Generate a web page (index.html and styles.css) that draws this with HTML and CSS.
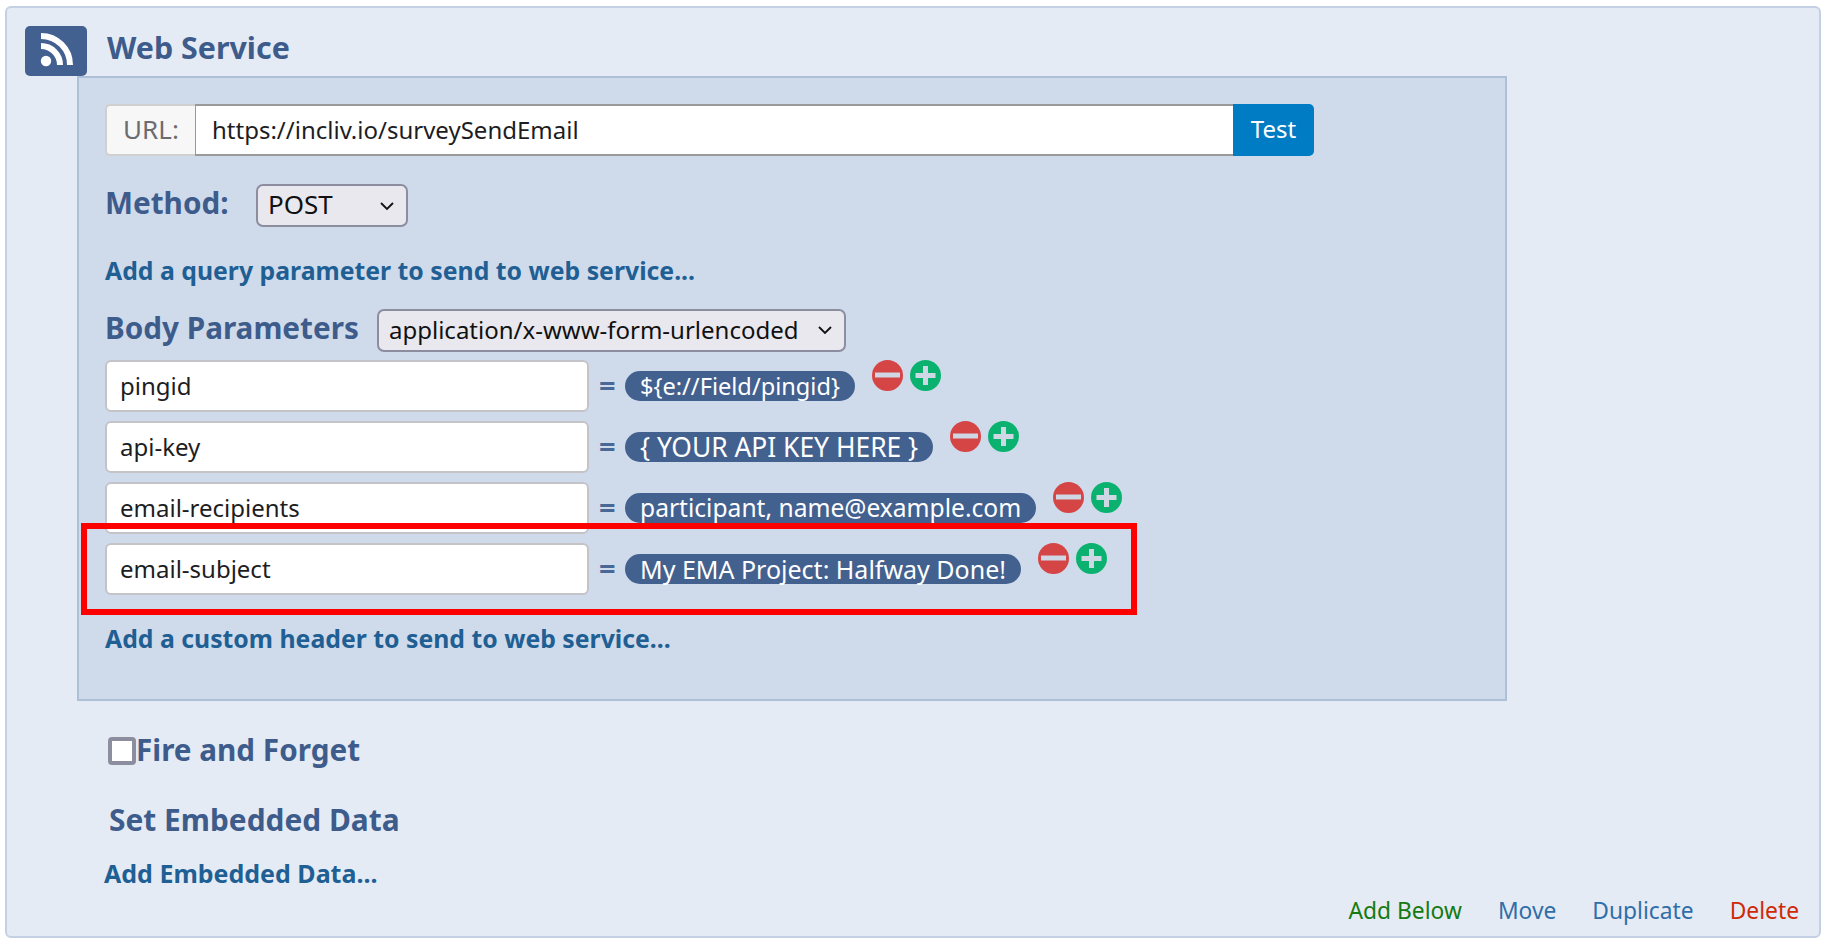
FILE: index.html
```html
<!DOCTYPE html>
<html lang="en">
<head>
<meta charset="utf-8">
<title>Web Service</title>
<link rel="stylesheet" href="styles.css">
</head>
<body>
<main class="card">
  <header class="card-head">
    <span class="type-icon">
      <svg width="62" height="50" viewBox="0 0 62 50"><circle cx="21" cy="35" r="5.2" fill="#fff"/><path d="M16 20a19 19 0 0 1 19 19M16 10a29 29 0 0 1 29 29" fill="none" stroke="#fff" stroke-width="6"/></svg>
    </span>
    <h1 class="title">Web Service</h1>
  </header>
  <section class="panel">
    <div class="url-row">
      <span class="url-label">URL:</span>
      <input class="url-input" value="https://incliv.io/surveySendEmail">
      <button class="test-btn">Test</button>
    </div>
    <div class="method-row">
      <span class="heading method-label">Method:</span>
      <span class="select select-method"><span class="select-text post">POST</span><svg class="chev" width="16" height="10" viewBox="0 0 16 10"><path d="M2 2l6 6 6-6" fill="none" stroke="#111" stroke-width="1.800"/></svg></span>
    </div>
    <a class="link query-link">Add a query parameter to send to web service...</a>
    <div class="body-row">
      <span class="heading body-label">Body Parameters</span>
      <span class="select select-body"><span class="select-text">application/x-www-form-urlencoded</span><svg class="chev" width="16" height="10" viewBox="0 0 16 10"><path d="M2 2l6 6 6-6" fill="none" stroke="#111" stroke-width="1.800"/></svg></span>
    </div>
    <div class="params">
      <div class="param">
        <input class="param-key" value="pingid"><span class="eq">=</span><span class="pill pill-field">${e://Field/pingid}</span>
        <span class="round minus"><svg width="31" height="31" viewBox="0 0 31 31"><path d="M3 15h25" stroke="#cfd7e4" stroke-width="5"/></svg></span>
        <span class="round plus"><svg width="31" height="31" viewBox="0 0 31 31"><path d="M5.500 15.500h20M15.500 6v19" stroke="#cfd7e4" stroke-width="5"/></svg></span>
      </div>
      <div class="param">
        <input class="param-key" value="api-key"><span class="eq">=</span><span class="pill pill-caps">{ YOUR API KEY HERE }</span>
        <span class="round minus"><svg width="31" height="31" viewBox="0 0 31 31"><path d="M3 15h25" stroke="#cfd7e4" stroke-width="5"/></svg></span>
        <span class="round plus"><svg width="31" height="31" viewBox="0 0 31 31"><path d="M5.500 15.500h20M15.500 6v19" stroke="#cfd7e4" stroke-width="5"/></svg></span>
      </div>
      <div class="param">
        <input class="param-key" value="email-recipients"><span class="eq">=</span><span class="pill pill-mail">participant, name@example.com</span>
        <span class="round minus"><svg width="31" height="31" viewBox="0 0 31 31"><path d="M3 15h25" stroke="#cfd7e4" stroke-width="5"/></svg></span>
        <span class="round plus"><svg width="31" height="31" viewBox="0 0 31 31"><path d="M5.500 15.500h20M15.500 6v19" stroke="#cfd7e4" stroke-width="5"/></svg></span>
      </div>
      <div class="param">
        <input class="param-key" value="email-subject"><span class="eq">=</span><span class="pill pill-subject">My EMA Project: Halfway Done!</span>
        <span class="round minus"><svg width="31" height="31" viewBox="0 0 31 31"><path d="M3 15h25" stroke="#cfd7e4" stroke-width="5"/></svg></span>
        <span class="round plus"><svg width="31" height="31" viewBox="0 0 31 31"><path d="M5.500 15.500h20M15.500 6v19" stroke="#cfd7e4" stroke-width="5"/></svg></span>
      </div>
    </div>
    <a class="link header-link">Add a custom header to send to web service...</a>
  </section>
  <label class="fire-row"><span class="checkbox"></span><span class="heading fire-label">Fire and Forget</span></label>
  <h2 class="heading embedded-title">Set Embedded Data</h2>
  <a class="link embedded-link">Add Embedded Data...</a>
  <footer class="actions">
    <a class="action add">Add Below</a>
    <a class="action move">Move</a>
    <a class="action dup">Duplicate</a>
    <a class="action del">Delete</a>
  </footer>
  <div class="highlight"></div>
</main>
</body>
</html>
```
FILE: styles.css
```css
* { box-sizing: border-box; }
html, body { margin: 0; padding: 0; background: #fff; }
body { font-family: "Noto Sans", "Open Sans", sans-serif; font-size: 24px; color: #1d1d1f; }
.card {
  position: relative;
  display: flex;
  flex-direction: column;
  align-items: flex-start;
  width: 1816px;
  height: 932px;
  margin: 6px 0 0 5px;
  padding: 18px 20px 10px 18px;
  background: #e4ebf5;
  border: 2px solid #c4d1e4;
  border-radius: 6px;
}
.card-head { display: flex; height: 50px; align-items: center; }
.type-icon { display: block; width: 62px; height: 50px; background: #426191; border-radius: 5px; }
.type-icon svg { display: block; }
.title { margin: -6px 0 0 20px; font-size: 30.400px; font-weight: 700; color: #3e5c8b; line-height: 36px; }
.panel {
  margin-left: 52px;
  width: 1430px;
  height: 625px;
  padding: 26px 26px 0;
  background: #cfdbeb;
  border: 2px solid #aebfd8;
}
.url-row { display: flex; width: 1209px; height: 52px; }
.url-label {
  display: flex; align-items: center; justify-content: center;
  width: 90px; padding-bottom: 3px; font-size: 26px; color: #6c6c70; background: #f7f7f7;
  border: 2px solid #d0d0d0; border-right: 0; border-radius: 5px 0 0 5px;
}
.url-input {
  flex: 1; min-width: 0; padding: 0 16px 2px;
  font: inherit; color: #1d1d1f; background: #fff;
  border: 2px solid #9a9a9a; border-width: 2px 0; border-left: 1px solid #9a9a9a; outline: 0;
}
.test-btn {
  width: 81px; padding: 0 0 3px; font: inherit; color: #fff; background: #007cc4;
  border: 0; border-radius: 0 5px 5px 0;
}
.heading { font-size: 29.700px; font-weight: 700; color: #3e5c8b; line-height: 36px; }
.method-row { display: flex; align-items: center; height: 43px; margin-top: 28px; }
.method-label { width: 151px; margin-top: -5px; }
.select {
  display: flex; align-items: center; justify-content: space-between;
  height: 43px; padding: 0 10px; color: #111; background: #e8e8ee;
  border: 2px solid #8d8da0; border-radius: 7px;
}
.select-text { margin-top: -2px; }
.post { font-size: 26px; margin-top: -4px; }
.select-method { width: 152px; }
.select-body { width: 469px; }
.chev { flex: none; margin-right: 1px; }
.link { display: block; font-size: 24.800px; font-weight: 700; color: #1f5f93; line-height: 30px; }
.query-link { margin-top: 28px; }
.body-row { display: flex; align-items: center; height: 42px; margin-top: 24px; }
.body-label { width: 272px; margin-top: -5px; }
.params { display: flex; flex-direction: column; gap: 9px; margin-top: 9px; }
.param { display: flex; align-items: flex-start; height: 52px; }
.param-key {
  width: 484px; height: 52px; padding: 0 13px 2px; font: inherit; color: #1d1d1f;
  background: #fff; border: 2px solid #c4c4c8; border-radius: 6px; outline: 0;
}
.eq { width: 36px; padding-left: 10px; font-size: 29px; line-height: 50px; font-weight: 700; color: #4a6896; }
.pill {
  height: 30px; margin-top: 11px; margin-right: 17px; padding: 0 15px; border-radius: 15px;
  line-height: 30px; color: #fff; background: #43618f; white-space: nowrap;
}
.pill-field { font-size: 23.600px; }
.pill-caps { font-size: 26.400px; }
.pill-mail { font-size: 24.600px; }
.pill-subject { font-size: 25px; }
.round { display: block; width: 31px; height: 31px; border-radius: 50%; }
.round svg { display: block; }
.minus { background: #d64545; margin-right: 7px; }
.plus { background: #0bb26f; }
.header-link { margin-top: 28px; }
.fire-row { display: flex; align-items: center; height: 28px; margin: 36px 0 0 83px; }
.fire-label { margin-top: -3px; }
.checkbox { display: block; width: 28px; height: 28px; background: #fff; border: 4px solid #8d8da0; border-radius: 4px; }
.embedded-title { margin: 37px 0 0 84px; font-size: 29.900px; }
.embedded-link { margin: 20px 0 0 79px; font-size: 25px; }
.actions { display: flex; gap: 36px; align-self: flex-end; margin-top: auto; height: 30px; line-height: 30px; }
.action { font-size: 22.800px; }
.add { color: #167a10; }
.move, .dup { color: #2f6ea8; }
.del { color: #cf2a06; }
.highlight {
  position: absolute; left: 74px; top: 515px; width: 1056px; height: 92px;
  border: 6px solid #f00;
}
```
